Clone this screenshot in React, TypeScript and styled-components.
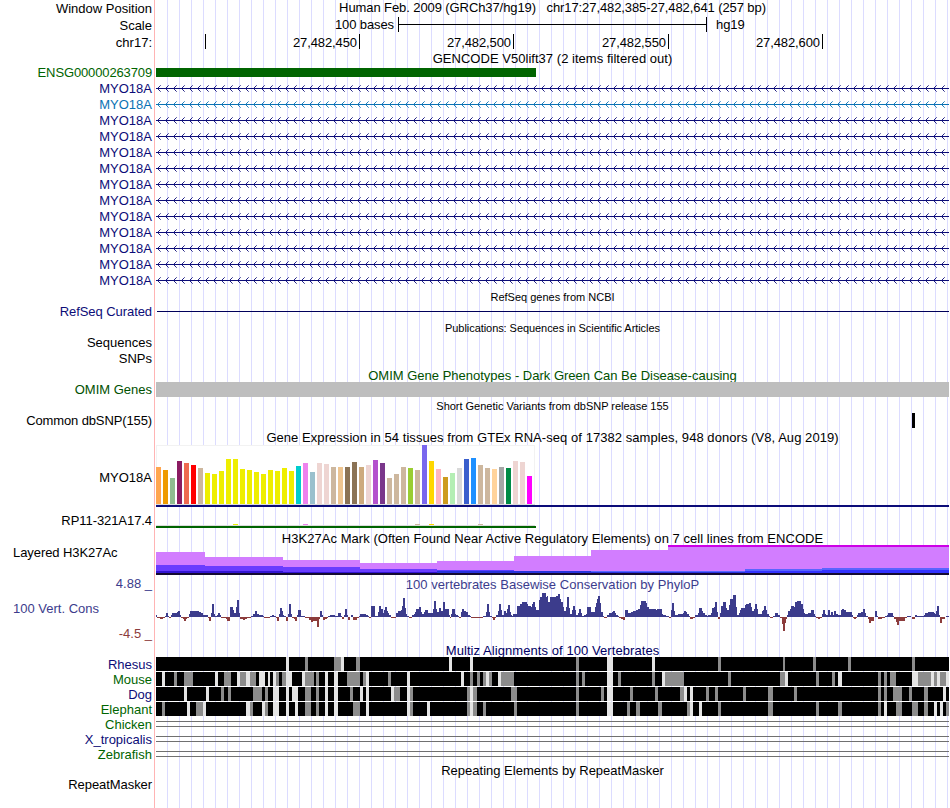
import React from 'react'
import styled, { createGlobalStyle } from 'styled-components'

const GlobalStyle = createGlobalStyle`
    body {
        margin: 0;
        background: #fff;
    }
`

const NAVY = '#0c0c78'
const GREEN = '#006400'
const TRACK_WIDTH = 793

const Browser = styled.div`
    width: 949px;
    height: 808px;
    overflow: hidden;
    font-family: "Liberation Sans", Arial, sans-serif;
    font-size: 13px;
    line-height: 15px;
    color: #000;
    white-space: pre;
    background:
        linear-gradient(#ffb4b4, #ffb4b4) 154px 0 / 1px 100% no-repeat,
        repeating-linear-gradient(to right, transparent 0 11px, #dcdcff 11px 12px) 156px 0 / 793px 100% no-repeat;
`

const Row = styled.div<{ $height: number }>`
    display: flex;
    height: ${p => p.$height}px;
`

const LabelColumn = styled.div`
    flex: none;
    width: 152px;
    margin-right: 4px;
    text-align: right;
`

const Label = styled.div<{ $top?: number, $color?: string, $left?: boolean, $spacing?: number }>`
    margin-top: ${p => p.$top || 0}px;
    padding-left: 13px;
    color: ${p => p.$color || '#000'};
    letter-spacing: ${p => p.$spacing || 0}px;
    text-align: ${p => p.$left ? 'left' : 'right'};
`

const Track = styled.div`
    flex: none;
    width: ${TRACK_WIDTH}px;

    svg {
        display: block;
    }
`

const Title = styled.div<{ $top?: number, $color?: string, $small?: boolean, $spacing?: number }>`
    margin-top: ${p => p.$top || 0}px;
    color: ${p => p.$color || '#000'};
    font-size: ${p => p.$small ? 11 : 13}px;
    letter-spacing: ${p => p.$spacing || 0}px;
    text-align: center;
`

const ScaleBar = styled.div`
    display: grid;
    grid-template-columns: 238px 309px auto;
    column-gap: 4px;
    letter-spacing: -0.1px;
`

const ScaleFrom = styled.span`
    text-align: right;
`

const ScaleTo = styled.span`
    padding-left: 5px;
`

const ScaleLine = styled.div`
    box-sizing: border-box;
    height: 15px;
    border: solid #000;
    border-width: 0 1px;
    background: linear-gradient(#000, #000) 0 7px / 100% 1px no-repeat;
`

const Ruler = styled.div`
    display: flex;
    letter-spacing: -0.1px;
`

const Tick = styled.div<{ $width: number }>`
    box-sizing: border-box;
    width: ${p => p.$width}px;
    height: 15px;
    padding: 1px 2px 0 0;
    border-right: 1px solid #000;
    text-align: right;
`

const Block = styled.div<{ $top?: number, $left?: number, $width: number, $height: number, $color: string }>`
    width: ${p => p.$width}px;
    height: ${p => p.$height}px;
    margin: ${p => p.$top || 0}px 0 0 ${p => p.$left || 0}px;
    background: ${p => p.$color};
`

const GapLines = styled.div`
    height: 4px;
    margin-top: 4px;
    border: solid #707070;
    border-width: 1px 0;
`

const Tissues = styled.div`
    box-sizing: border-box;
    display: flex;
    align-items: flex-end;
    gap: 2px;
    width: 379px;
    height: 60px;
    border-bottom: 1px solid #dcdcdc;
    background: #fff;
    box-shadow: inset 1px 1px #f2f2f2, inset -1px 0 #f2f2f2;
`

const Tissue = styled.div<{ $height: number, $color: string }>`
    width: 5px;
    height: ${p => p.$height}px;
    background: ${p => p.$color};
`

// median expression per tissue: [bar height, tissue color]
const tissues: [number, string][] = [
    [37, '#ffa54f'], [34, '#ee9a00'], [26, '#8fbc8f'], [43, '#8b1c62'], [41, '#ee6a50'], [39, '#ff0000'],
    [36, '#cdb79e'], [31, '#eeee00'], [30, '#eeee00'], [33, '#eeee00'], [45, '#eeee00'], [45, '#eeee00'],
    [35, '#eeee00'], [34, '#eeee00'], [32, '#eeee00'], [30, '#eeee00'], [34, '#eeee00'], [33, '#eeee00'],
    [36, '#eeee00'], [33, '#eeee00'], [38, '#00cdcd'], [41, '#ee82ee'], [32, '#9ac0cd'], [41, '#eed5d2'],
    [40, '#eed5d2'], [37, '#cdb79e'], [37, '#eec591'], [37, '#8b7355'], [42, '#8b7355'], [37, '#cdaa7d'],
    [39, '#eed5d2'], [44, '#b452cd'], [41, '#7a378b'], [26, '#cdb79e'], [30, '#cdb79e'], [37, '#cdb79e'],
    [36, '#9acd32'], [34, '#cdb79e'], [59, '#7a67ee'], [43, '#ffd700'], [35, '#ffb6c1'], [27, '#cd9b1d'],
    [31, '#b4eeb4'], [36, '#d9d9d9'], [45, '#3a5fcd'], [46, '#1e90ff'], [39, '#cdb79e'], [36, '#cdb79e'],
    [35, '#ffd39b'], [37, '#a6a6a6'], [36, '#008b45'], [43, '#eed5d2'], [42, '#eed5d2'], [28, '#ff00ff'],
]

// histone mark layers: [x, y, width, height, color]
const h3k27ac: [number, number, number, number, string][] = [
    [0, 7, 49, 21, '#d27dff'], [49, 12, 78, 16, '#d27dff'], [127, 15, 77, 13, '#d27dff'],
    [204, 18, 77, 10, '#d27dff'], [281, 16, 77, 12, '#d27dff'], [358, 11, 77, 17, '#d27dff'],
    [435, 5, 77, 23, '#d27dff'], [512, 0, 281, 28, '#d27dff'], [512, 0, 281, 2, '#cd00e6'],
    [0, 20, 49, 8, '#6a3cff'], [49, 21, 78, 7, '#6a3cff'], [127, 22, 77, 6, '#6a3cff'],
    [204, 24, 77, 4, '#6a3cff'], [281, 25, 77, 3, '#5a3cff'],
    [0, 26, 127, 2, '#3214d2'], [127, 27, 154, 1, '#3214d2'], [281, 26, 77, 2, '#2832dc'],
    [358, 26, 231, 2, '#2832dc'], [435, 26, 154, 1, '#5a64ff'],
    [589, 24, 77, 2, '#5a64ff'], [589, 26, 77, 2, '#3232ff'],
    [666, 23, 127, 2, '#5a64ff'], [666, 25, 127, 3, '#3232ff'],
    [0, 28, 793, 2, '#140a32'],
]

// conservation score steps as x:height, each one runs to the start of the next
const phyloP = `
0:2 1:-1 4:-2 7:-1 9:1 10:4 12:1 13:-1 15:2 16:4 21:5 22:6 24:2 25:-1 27:-2 28:-4 30:-2 31:-1
33:3 34:6 43:5 45:4 47:2 52:-1 53:-4 55:4 56:13 58:3 59:1 61:2 62:4 64:2 65:-1 70:-2 71:-4
74:10 77:7 78:4 80:10 81:17 83:4 84:-2 87:-3 89:-2 91:-1 95:1 97:3 99:6 101:3 103:2 107:1
108:-1 114:1 116:2 118:1 120:-1 121:-4 123:3 124:9 126:6 127:2 128:1 130:-4 132:3 133:13 135:3
136:-1 138:-2 139:-4 141:2 142:7 145:1 149:-1 153:-3 155:-5 157:-4 161:-10 163:-2 164:6 166:2
167:-3 169:-2 171:-1 172:1 174:2 179:1 182:4 185:1 186:-2 188:2 189:8 191:2 192:-3 194:0 195:2
197:-3 201:-1 203:1 204:3 210:2 212:1 213:-1 215:11 219:1 222:5 223:11 225:8 227:4 228:7
229:10 231:6 232:4 233:2 235:-1 240:4 242:6 245:7 246:11 247:19 249:9 250:3 251:1 253:-1
256:2 258:3 259:5 260:8 263:10 265:5 266:3 268:5 269:7 272:4 277:8 278:16 280:8 281:5 283:9
285:6 287:15 289:8 293:2 294:-1 295:3 296:8 299:3 300:2 302:1 303:-1 305:5 306:8 308:6 310:5
312:2 314:1 315:-1 327:1 330:5 331:13 333:5 334:1 336:-1 337:-3 339:-1 340:2 342:6 343:13
345:7 346:2 348:6 350:4 351:8 352:12 354:5 355:2 356:1 357:3 361:11 364:13 366:15 371:13
372:11 375:10 376:13 377:15 379:10 380:7 383:17 384:20 386:24 390:20 391:21 392:15 394:20
400:21 402:23 404:18 405:15 407:10 408:6 410:10 411:20 413:9 414:3 416:7 417:11 419:7 420:2
422:4 423:8 425:4 426:1 428:2 430:3 431:10 435:5 439:10 440:14 441:18 442:21 444:14 445:5
447:1 448:-1 451:2 453:4 456:5 457:6 459:4 460:2 462:1 463:-1 465:-2 467:-3 469:7 472:4
475:5 477:6 480:7 482:8 484:12 485:16 490:14 491:10 493:8 500:7 501:8 506:3 507:2 510:1
513:-1 515:7 516:14 518:6 519:2 522:3 527:4 528:6 530:5 531:3 533:1 534:-2 537:-1 539:2
542:4 543:9 546:6 547:4 549:2 551:1 552:2 555:4 556:9 558:10 559:15 561:5 562:-2 564:4
565:11 567:15 570:9 571:7 573:12 574:18 577:22 580:10 581:2 583:4 584:7 585:9 589:12 590:13
593:14 595:10 596:6 598:8 599:13 601:8 602:3 606:6 607:7 608:11 610:7 611:3 613:1 614:-1
617:1 619:4 622:2 624:-1 626:-7 627:-14 629:-6 630:-2 631:2 632:6 634:8 635:11 638:10 639:15
641:16 645:13 647:8 648:4 649:3 652:4 655:7 658:3 659:1 660:-1 662:-2 664:-1 666:3 667:7
669:3 670:2 672:7 674:2 675:5 677:2 678:6 680:3 682:2 685:7 686:8 688:7 690:5 696:2 697:-1
698:-2 700:-1 701:2 702:4 705:5 707:8 709:4 710:1 712:-2 713:-6 715:-4 718:0 719:6 721:1
722:-2 726:-1 729:1 731:2 732:4 737:1 738:-2 740:-5 741:-8 743:-4 749:-1 751:1 755:0 756:-2
759:2 761:1 768:2 769:4 772:5 778:4 779:3 780:6 781:11 783:2 784:-6 786:-2 789:0 790:1 793:0`
    .trim().split(/\s+/).map(s => s.split(':').map(Number))

// alignment blocks that differ from a full match, as x+width
const species = [
    {
        name: 'Rhesus', color: NAVY,
        light: '130+3 185+3 293+3 314+3 451+6 496+3',
        gray: '149+3 178+7 200+4 420+3 562+3 627+2 657+3 692+3 756+3',
    },
    {
        name: 'Mouse', color: GREEN,
        light: '6+3 59+3 81+3 90+4 103+6 112+2 117+3 130+6 146+3 169+3 178+4 210+3 251+3 305+3 330+3 342+3 451+6 506+3 629+3 682+4 756+6 775+3 781+3 790+3',
        gray: '18+3 28+9 68+7 84+6 94+6 120+3 126+4 149+9 160+3 191+13 207+3 232+3 314+3 321+3 327+3 333+3 345+13 420+3 426+3 462+3 496+3 509+19 572+3 624+5 660+3 676+3 722+3 728+3 734+6 762+13 778+3 784+6',
    },
    {
        name: 'Dog', color: NAVY,
        light: '28+3 50+3 117+6 130+3 136+6 169+3 178+4 204+3 210+3 235+3 251+3 314+3 451+6 528+3 534+3 787+3',
        gray: '65+3 72+3 97+9 109+3 149+6 160+3 194+3 238+6 254+3 311+3 317+4 355+6 420+3 445+3 474+3 499+3 524+4 550+3 559+3 587+3 612+5 638+3 722+3 728+3 737+9 753+3 768+4',
    },
    {
        name: 'Elephant', color: GREEN,
        light: '31+3 47+3 90+4 106+3 117+6 130+3 139+3 169+3 178+4 210+3 251+3 271+3 314+3 451+6 534+3 543+3 728+3 778+3 784+3',
        gray: '6+3 40+7 94+3 109+3 149+6 160+3 197+7 254+3 311+3 317+4 327+3 358+3 420+3 471+3 480+4 502+4 531+3 562+3 612+5 660+3 682+4 722+3 740+6 756+6 768+4 790+3',
    },
]

const unaligned = [
    { name: 'Chicken', color: GREEN },
    { name: 'X_tropicalis', color: NAVY },
    { name: 'Zebrafish', color: GREEN },
]

const transcripts = Array.from({ length: 13 }, (_, i) => i === 1 ? '#0a72b4' : NAVY)

const Transcript = ({ color, id }: { color: string, id: string }) => (
    <svg width={TRACK_WIDTH} height="16" shapeRendering="crispEdges">
        <defs>
            <pattern id={id} x="1" width="8" height="16" patternUnits="userSpaceOnUse">
                <path d="M1 7h1v1h-1zM2 6h1v1h-1zM1 9h1v1h-1zM2 10h1v1h-1z" fill={color} opacity="0.9" />
                <path d="M3 5h1v1h-1zM3 11h1v1h-1z" fill={color} opacity="0.6" />
            </pattern>
        </defs>
        <rect x="1" width={TRACK_WIDTH - 1} height="16" fill={`url(#${id})`} />
        <rect y="8" width={TRACK_WIDTH} height="1" fill={color} />
    </svg>
)

const Conservation = () => (
    <svg width={TRACK_WIDTH} height="50" shapeRendering="crispEdges">
        {phyloP.slice(0, -1).map(([x, h], i) => (
            <rect
                key={x}
                x={x}
                y={h > 0 ? 25 - h : 25}
                width={phyloP[i + 1][0] - x}
                height={Math.abs(h)}
                fill={h > 0 ? '#3c3c8c' : '#8c3c3c'}
            />
        ))}
    </svg>
)

const cells = (list: string, fill: string) => list.split(' ').map(cell => {
    const [x, width] = cell.split('+')
    return <rect key={x} x={x} width={width} height="14" fill={fill} />
})

const Alignment = ({ light, gray }: { light: string, gray: string }) => (
    <svg width={TRACK_WIDTH} height="14" shapeRendering="crispEdges">
        <rect width={TRACK_WIDTH} height="14" />
        {cells(gray, '#8c8c8c')}
        {cells(light, '#e4e4e4')}
    </svg>
)

type TitleRowProps = {
    height: number
    top?: number
    color?: string
    small?: boolean
    spacing?: number
    children: React.ReactNode
}

const TitleRow = ({ height, top, color, small, spacing, children }: TitleRowProps) => (
    <Row $height={height}>
        <LabelColumn />
        <Track>
            <Title $top={top} $color={color} $small={small} $spacing={spacing}>{children}</Title>
        </Track>
    </Row>
)

type DataRowProps = {
    height: number
    label: string
    top?: number
    color?: string
    left?: boolean
    spacing?: number
    children?: React.ReactNode
}

const DataRow = ({ height, label, top, color, left, spacing, children }: DataRowProps) => (
    <Row $height={height}>
        <LabelColumn>
            <Label $top={top} $color={color} $left={left} $spacing={spacing}>{label}</Label>
        </LabelColumn>
        <Track>{children}</Track>
    </Row>
)

export default function App() {
    return (
        <>
            <GlobalStyle />
            <Browser>
                <DataRow height={17} label="Window Position" top={1}>
                    <Title $spacing={-0.09}>{'Human Feb. 2009 (GRCh37/hg19)   chr17:27,482,385-27,482,641 (257 bp)'}</Title>
                </DataRow>
                <DataRow height={17} label="Scale" top={1}>
                    <ScaleBar>
                        <ScaleFrom>100 bases</ScaleFrom>
                        <ScaleLine />
                        <ScaleTo>hg19</ScaleTo>
                    </ScaleBar>
                </DataRow>
                <DataRow height={16} label="chr17:" top={1}>
                    <Ruler>
                        <Tick $width={50} />
                        <Tick $width={154}>27,482,450</Tick>
                        <Tick $width={154}>27,482,500</Tick>
                        <Tick $width={155}>27,482,550</Tick>
                        <Tick $width={154}>27,482,600</Tick>
                    </Ruler>
                </DataRow>

                <TitleRow height={16} top={1} spacing={0.03}>GENCODE V50lift37 (2 items filtered out)</TitleRow>
                <DataRow height={14} label="ENSG00000263709" top={-1} color={GREEN} spacing={-0.13}>
                    <Block $top={2} $width={380} $height={9} $color={GREEN} />
                </DataRow>
                {transcripts.map((color, i) => (
                    <DataRow key={i} height={16} label="MYO18A" top={1} color={color}>
                        <Transcript color={color} id={`arrows-${i}`} />
                    </DataRow>
                ))}

                <TitleRow height={16} top={2} small>RefSeq genes from NCBI</TitleRow>
                <DataRow height={15} label="RefSeq Curated" color={NAVY} spacing={-0.07}>
                    <Block $top={7} $left={1} $width={792} $height={1} $color="#00005a" />
                </DataRow>
                <TitleRow height={16} top={2} small spacing={-0.06}>Publications: Sequences in Scientific Articles</TitleRow>
                <DataRow height={16} label="Sequences" />
                <DataRow height={16} label="SNPs" />

                <TitleRow height={15} top={1} color="#005000">
                    OMIM Gene Phenotypes - Dark Green Can Be Disease-causing
                </TitleRow>
                <DataRow height={15} label="OMIM Genes" color="#005000">
                    <Block $width={TRACK_WIDTH} $height={15} $color="#bebebe" />
                </DataRow>
                <TitleRow height={16} top={2} small spacing={-0.02}>Short Genetic Variants from dbSNP release 155</TitleRow>
                <DataRow height={15} label="Common dbSNP(155)" spacing={-0.12}>
                    <Block $left={756} $width={3} $height={15} $color="#000" />
                </DataRow>

                <TitleRow height={17} top={2} spacing={0.055}>
                    Gene Expression in 54 tissues from GTEx RNA-seq of 17382 samples, 948 donors (V8, Aug 2019)
                </TitleRow>
                <DataRow height={62} label="MYO18A" top={25}>
                    <Tissues>
                        {tissues.map(([h, color], i) => <Tissue key={i} $height={h} $color={color} />)}
                    </Tissues>
                    <Block $width={TRACK_WIDTH} $height={2} $color={NAVY} />
                </DataRow>
                <DataRow height={21} label="RP11-321A17.4" top={6} spacing={-0.07}>
                    <svg width="380" height="21" shapeRendering="crispEdges">
                        <rect y="18" width="379" height="1" fill="#dcdcdc" />
                        {[11, 21, 37, 39, 46].map(i => (
                            <rect key={i} x={i * 7} y="17" width="5" height="1" fill={tissues[i][1]} />
                        ))}
                        <rect y="19" width="380" height="2" fill={GREEN} />
                    </svg>
                </DataRow>

                <TitleRow height={17} top={3} spacing={0.045}>
                    H3K27Ac Mark (Often Found Near Active Regulatory Elements) on 7 cell lines from ENCODE
                </TitleRow>
                <DataRow height={30} label="Layered H3K27Ac" left spacing={-0.07}>
                    <svg width={TRACK_WIDTH} height="30" shapeRendering="crispEdges">
                        {h3k27ac.map(([x, y, width, height, fill], i) => (
                            <rect key={i} x={x} y={y} width={width} height={height} fill={fill} />
                        ))}
                    </svg>
                </DataRow>

                <Row $height={67}>
                    <LabelColumn>
                        <Label $top={1} $color="#3c3c8c">4.88 _</Label>
                        <Label $top={10} $color="#3c3c8c" $left>100 Vert. Cons</Label>
                        <Label $top={10} $color="#8c3c3c">-4.5 _</Label>
                    </LabelColumn>
                    <Track>
                        <Title $top={2} $color="#3c3c8c" $spacing={0.03}>100 vertebrates Basewise Conservation by PhyloP</Title>
                        <Conservation />
                    </Track>
                </Row>

                <TitleRow height={15} top={1} color="#000064" spacing={0.07}>Multiz Alignments of 100 Vertebrates</TitleRow>
                {species.map(s => (
                    <DataRow key={s.name} height={15} label={s.name} color={s.color}>
                        <Alignment light={s.light} gray={s.gray} />
                    </DataRow>
                ))}
                {unaligned.map(s => (
                    <DataRow key={s.name} height={15} label={s.name} color={s.color}>
                        <GapLines />
                    </DataRow>
                ))}

                <TitleRow height={16} top={1}>Repeating Elements by RepeatMasker</TitleRow>
                <DataRow height={30} label="RepeatMasker" top={-1} spacing={-0.07} />
            </Browser>
        </>
    )
}
